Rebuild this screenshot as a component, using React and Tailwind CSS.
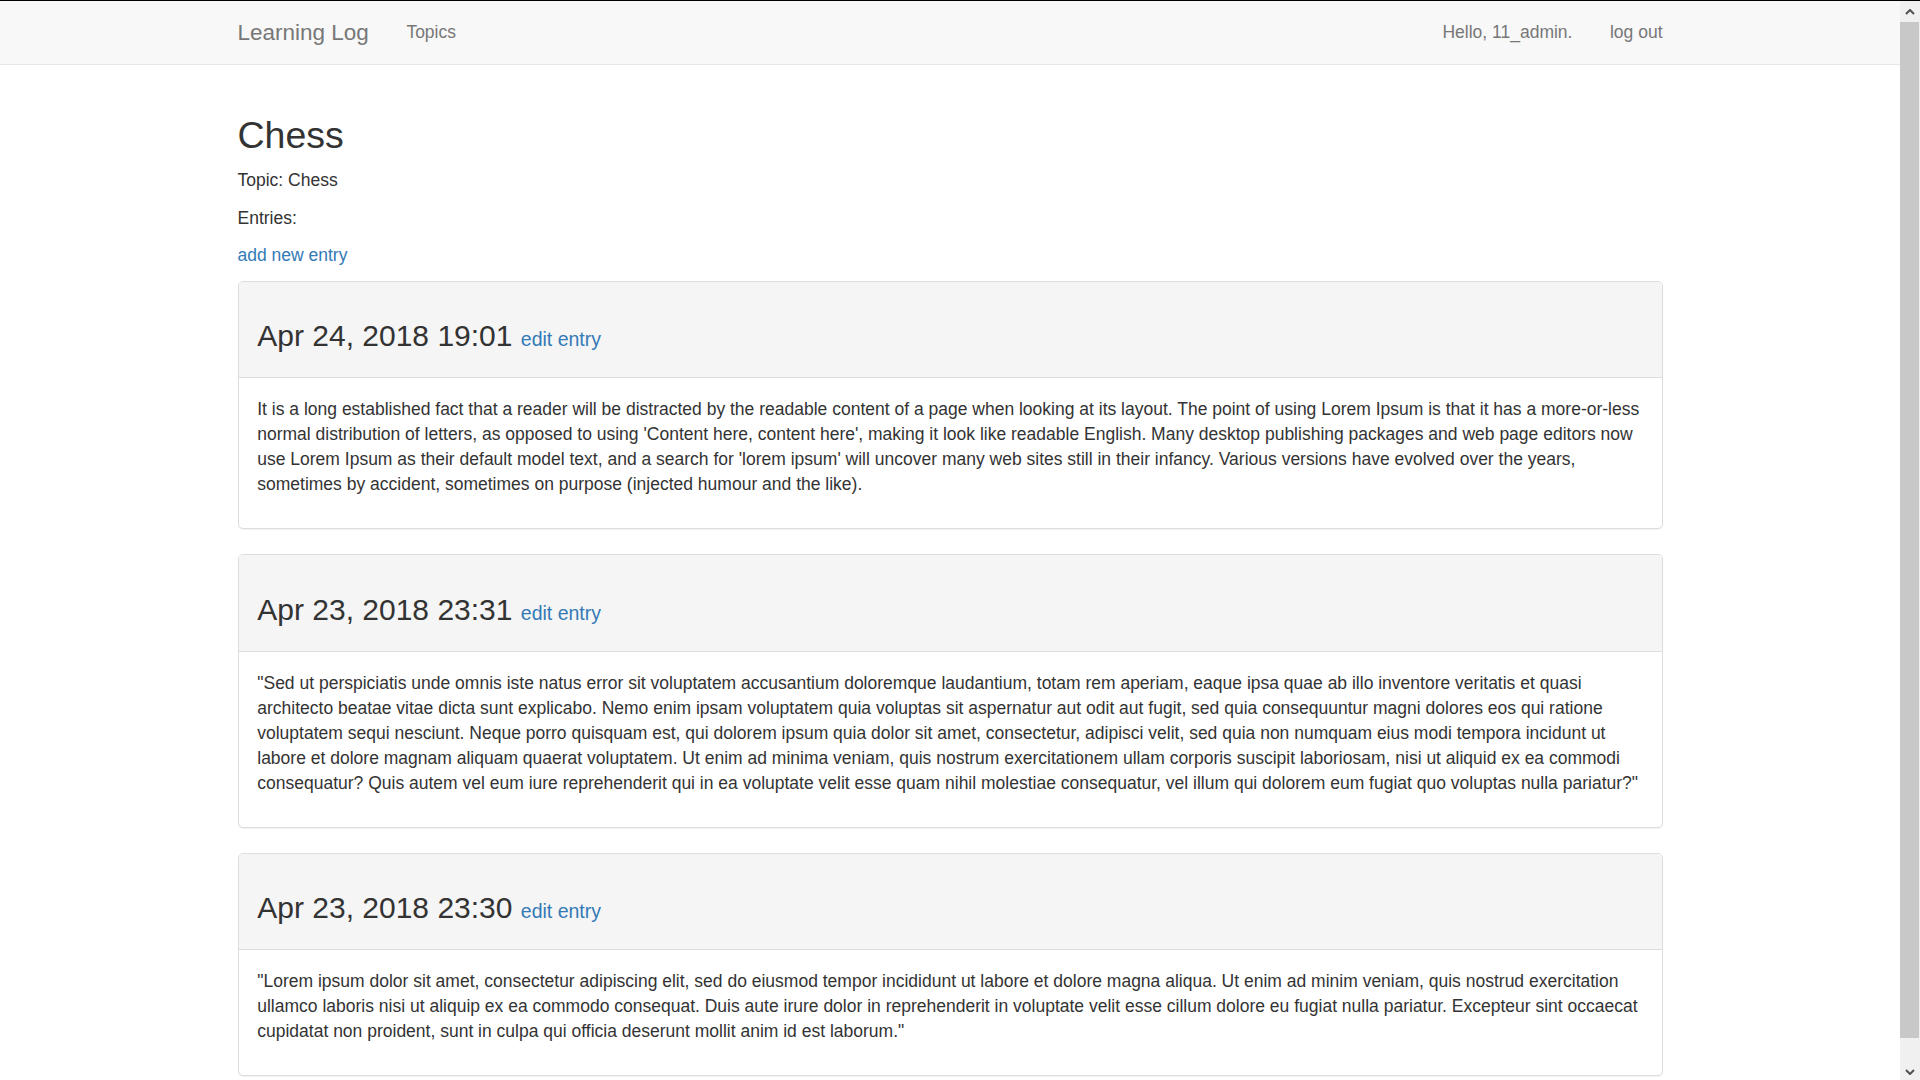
const entries = [
  {
    date: 'Apr 24, 2018 19:01',
    text: "It is a long established fact that a reader will be distracted by the readable content of a page when looking at its layout. The point of using Lorem Ipsum is that it has a more-or-less normal distribution of letters, as opposed to using 'Content here, content here', making it look like readable English. Many desktop publishing packages and web page editors now use Lorem Ipsum as their default model text, and a search for 'lorem ipsum' will uncover many web sites still in their infancy. Various versions have evolved over the years, sometimes by accident, sometimes on purpose (injected humour and the like).",
  },
  {
    date: 'Apr 23, 2018 23:31',
    text: '"Sed ut perspiciatis unde omnis iste natus error sit voluptatem accusantium doloremque laudantium, totam rem aperiam, eaque ipsa quae ab illo inventore veritatis et quasi architecto beatae vitae dicta sunt explicabo. Nemo enim ipsam voluptatem quia voluptas sit aspernatur aut odit aut fugit, sed quia consequuntur magni dolores eos qui ratione voluptatem sequi nesciunt. Neque porro quisquam est, qui dolorem ipsum quia dolor sit amet, consectetur, adipisci velit, sed quia non numquam eius modi tempora incidunt ut labore et dolore magnam aliquam quaerat voluptatem. Ut enim ad minima veniam, quis nostrum exercitationem ullam corporis suscipit laboriosam, nisi ut aliquid ex ea commodi consequatur? Quis autem vel eum iure reprehenderit qui in ea voluptate velit esse quam nihil molestiae consequatur, vel illum qui dolorem eum fugiat quo voluptas nulla pariatur?"',
  },
  {
    date: 'Apr 23, 2018 23:30',
    text: '"Lorem ipsum dolor sit amet, consectetur adipiscing elit, sed do eiusmod tempor incididunt ut labore et dolore magna aliqua. Ut enim ad minim veniam, quis nostrud exercitation ullamco laboris nisi ut aliquip ex ea commodo consequat. Duis aute irure dolor in reprehenderit in voluptate velit esse cillum dolore eu fugiat nulla pariatur. Excepteur sint occaecat cupidatat non proident, sunt in culpa qui officia deserunt mollit anim id est laborum."',
  },
]

const Navbar = () => (
  <nav className="border-b border-[#e7e7e7] bg-[#f8f8f8]">
    <div className="mx-auto flex h-[62.5px] w-[1462.5px] px-[18.75px]">
      <a href="#" className="-ml-[18.75px] px-[18.75px] py-[18.75px] text-[22.5px] leading-[25px] text-[#777]">
        Learning Log
      </a>
      <a href="#" className="px-[18.75px] py-[18.75px] text-[#777]">
        Topics
      </a>
      <div className="-mr-[18.75px] ml-auto flex">
        <a href="#" className="px-[18.75px] py-[18.75px] text-[#777]">
          Hello, 11_admin.
        </a>
        <a href="#" className="px-[18.75px] py-[18.75px] text-[#777]">
          log out
        </a>
      </div>
    </div>
  </nav>
)

const EntryPanel = ({ entry }) => (
  <div className="mb-[25px] rounded-[5px] border border-[#ddd] bg-white shadow-[0_1px_1px_rgba(0,0,0,0.05)]">
    <div className="rounded-t-[4px] border-b border-[#ddd] bg-[#f5f5f5] px-[18.75px] py-[12.5px]">
      <h3 className="mb-[12.5px] mt-[25px] text-[30px] font-medium leading-[33px] text-[#333]">
        {entry.date}{' '}
        <small className="text-[19.5px] font-normal leading-none">
          <a href="#" className="text-[#337ab7]">edit entry</a>
        </small>
      </h3>
    </div>
    <div className="p-[18.75px]">
      <p className="mb-[12.5px]">{entry.text}</p>
    </div>
  </div>
)

const Scrollbar = () => (
  <div className="flex w-[20px] flex-col bg-[#f0f0f0]">
    <div className="flex h-[21px] items-center justify-center">
      <svg width="10" height="6" viewBox="0 0 10 6">
        <path d="M1 5 L5 1 L9 5" fill="none" stroke="#505050" strokeWidth="2" />
      </svg>
    </div>
    <div className="mr-px h-[1016px] bg-[#c8c8c8]" />
    <div className="flex flex-1 items-end justify-center pb-[5px]">
      <svg width="10" height="6" viewBox="0 0 10 6">
        <path d="M1 1 L5 5 L9 1" fill="none" stroke="#505050" strokeWidth="2" />
      </svg>
    </div>
  </div>
)

const App = () => {
  return (
    <div className="flex h-[1080px] flex-col overflow-hidden bg-white font-['Liberation_Sans',Arial,sans-serif] text-[17.5px] leading-[25px] text-[#333]">
      <div className="h-px bg-black" />
      <div className="flex min-h-0 flex-1">
        <div className="min-w-0 flex-1 overflow-hidden">
          <Navbar />
          <div className="mx-auto w-[1462.5px] px-[18.75px] pt-[25px]">
            <h2 className="mb-[12.5px] mt-[25px] text-[37.5px] font-medium leading-[41.25px]">Chess</h2>
            <p className="mb-[12.5px]">Topic: Chess</p>
            <p className="mb-[12.5px]">Entries:</p>
            <p className="mb-[12.5px]">
              <a href="#" className="text-[#337ab7]">add new entry</a>
            </p>
            {entries.map((entry) => (
              <EntryPanel key={entry.date} entry={entry} />
            ))}
          </div>
        </div>
        <Scrollbar />
      </div>
    </div>
  )
}

export default App
